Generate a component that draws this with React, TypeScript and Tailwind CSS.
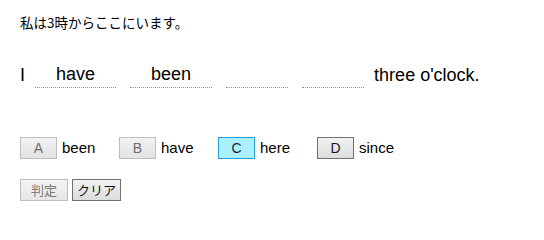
import React from "react";

type Choice = { key: string; word: string; state: "used" | "selected" | "idle" };

const choices: Choice[] = [
  { key: "A", word: "been", state: "used" },
  { key: "B", word: "have", state: "used" },
  { key: "C", word: "here", state: "selected" },
  { key: "D", word: "since", state: "idle" },
];

const blanks = ["have", "been", "", ""];

const jp = "font-['Noto_Sans_CJK_JP','Noto_Sans',sans-serif]";

export default function App() {
  return (
    <div className="min-h-screen bg-white px-[20px] pt-[13px] font-['Liberation_Sans',Arial,sans-serif] text-black">
      <p className={`${jp} text-[13.5px] leading-[19px]`}>私は3時からここにいます。</p>

      <div className="mt-[31px] flex items-end text-[18px] leading-[22px]">
        <span className="mr-[3px] pb-[2px]">I</span>
        {blanks.map((w, i) => (
          <span
            key={i}
            className="mx-[7px] inline-block min-w-[62px] border-b border-dotted border-[#8f8f8f] px-[21px] pb-[2px] text-center"
          >
            {w || "\u00a0"}
          </span>
        ))}
        <span className="ml-[3px] pb-[2px]">three o'clock.</span>
      </div>

      <div className="mt-[49px] flex">
        {choices.map((c) => (
          <div key={c.key} className="flex w-[99px] items-center">
            <button
              className={[
                "h-[22px] w-[37px] border text-[14px] leading-none",
                c.state === "selected"
                  ? "border-[#2a9fd6] bg-[#aaf0ff] text-[#222]"
                  : c.state === "used"
                    ? "border-[#bdbdbd] bg-gradient-to-b from-[#f2f2f2] to-[#e3e3e3] text-[#6d6d6d]"
                    : "border-[#707070] bg-gradient-to-b from-[#f2f2f2] to-[#dcdcdc] text-[#1a1a1a]",
              ].join(" ")}
            >
              {c.key}
            </button>
            <span className="ml-[5px] text-[15px]">{c.word}</span>
          </div>
        ))}
      </div>

      <div className={`${jp} mt-[19px] flex gap-[4px] text-[13px]`}>
        <button className="h-[22px] w-[48px] border border-[#bdbdbd] bg-gradient-to-b from-[#f4f4f4] to-[#e6e6e6] leading-none text-[#7a7a7a]">
          判定
        </button>
        <button className="h-[22px] w-[49px] border border-[#707070] bg-gradient-to-b from-[#f2f2f2] to-[#dcdcdc] leading-none text-[#111]">
          クリア
        </button>
      </div>
    </div>
  );
}
